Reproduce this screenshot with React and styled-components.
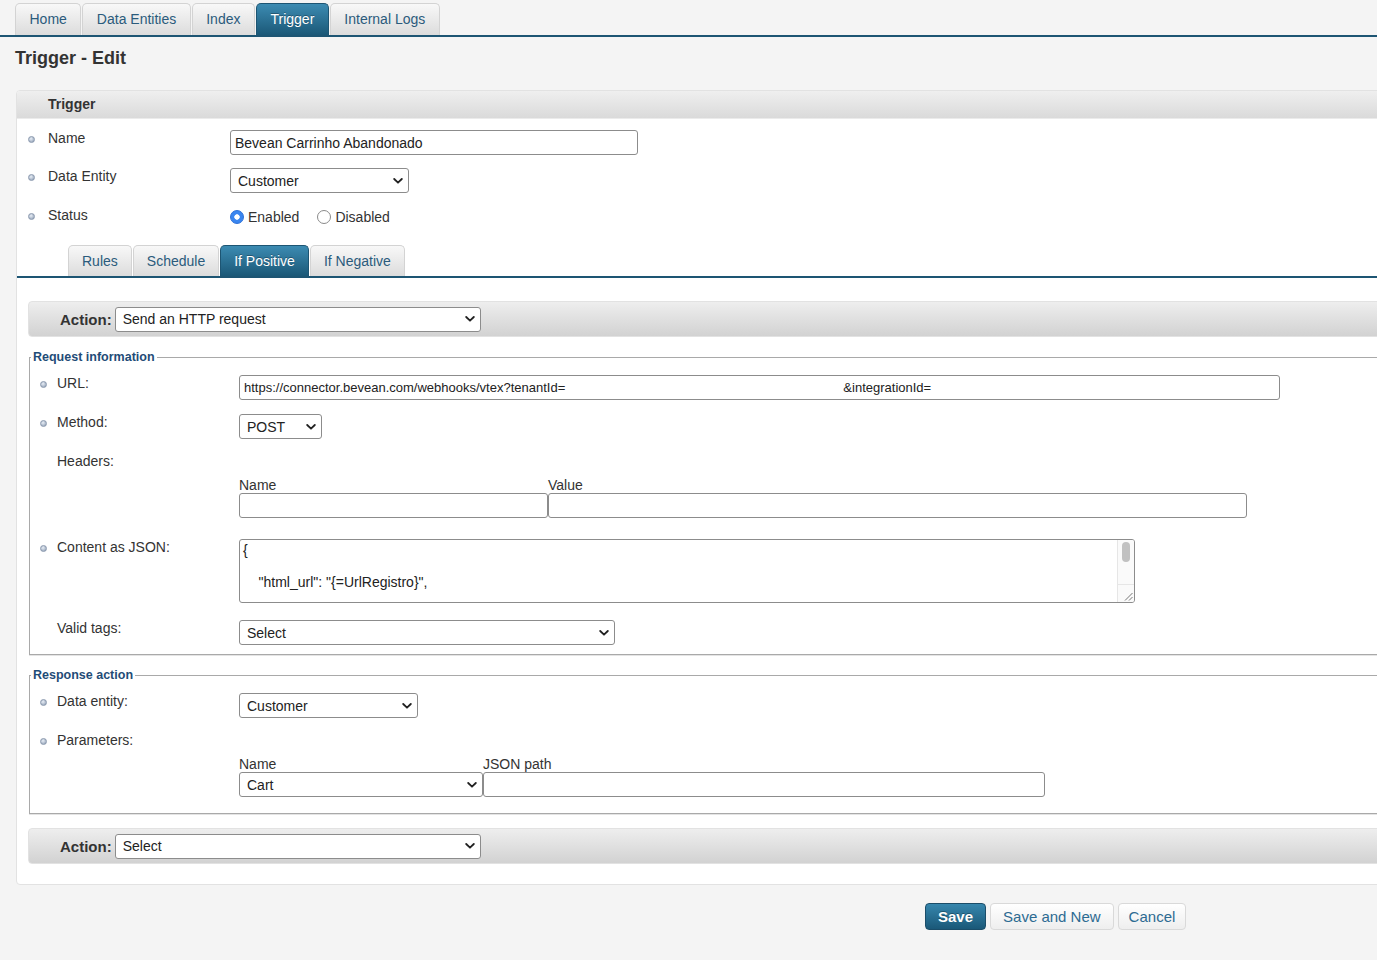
import React from 'react';
import styled, { createGlobalStyle, css } from 'styled-components';

const FONT = '"Liberation Sans", Arial, Helvetica, sans-serif';

const GlobalStyle = createGlobalStyle`
  html, body {
    margin: 0;
    background: #f4f4f4;
    font-family: ${FONT};
    color: #333;
    overflow-x: hidden;
  }
`;

const JSON_TEXT = `{

    "html_url": "{=UrlRegistro}",

    "id": "{=Id}",
    "email": "{=email}",
    "firstName": "{=firstName}",
    "lastName": "{=lastName}",
    "phone": "{=phone}",
    "items": "{=rclastcart}"
}`;

const URL_VALUE =
  'https://connector.bevean.com/webhooks/vtex?tenantId=' +
  ' '.repeat(77) +
  '&integrationId=';

const Chevron = () => (
  <svg width="10" height="7" viewBox="0 0 10 7">
    <polyline points="1.2,1.5 5,5.2 8.8,1.5" fill="none" stroke="#222" strokeWidth="1.8" strokeLinecap="round" strokeLinejoin="round" />
  </svg>
);

const ResizeGrip = () => (
  <svg width="9" height="9" viewBox="0 0 9 9">
    <line x1="8.5" y1="1" x2="1" y2="8.5" stroke="#777" strokeWidth="1" />
    <line x1="8.5" y1="5" x2="5" y2="8.5" stroke="#777" strokeWidth="1" />
  </svg>
);

const Select = ({ width, value }) => (
  <SelectWrap style={{ width }}>
    <NativeSelect defaultValue={value}>
      <option>{value}</option>
    </NativeSelect>
    <ChevronSlot>
      <Chevron />
    </ChevronSlot>
  </SelectWrap>
);

const Field = ({ label, bullet = true, col, h, children }) => (
  <Row $col={col} $h={h}>
    <Label>
      <Bullet $hidden={!bullet} $gap={col === 202 ? 13 : 10} />
      {label}
    </Label>
    <Value>{children}</Value>
  </Row>
);

const App = () => {
  return (
    <Page>
      <GlobalStyle />
      <NavBar>
        <Tab>Home</Tab>
        <Tab>Data Entities</Tab>
        <Tab>Index</Tab>
        <Tab $active>Trigger</Tab>
        <Tab>Internal Logs</Tab>
      </NavBar>

      <Title>Trigger - Edit</Title>

      <Panel>
        <PanelHeader>Trigger</PanelHeader>
        <PanelBody>
          <Field label="Name" col={202} h={38}>
            <TextInput $w={408} defaultValue="Bevean Carrinho Abandonado" />
          </Field>
          <Field label="Data Entity" col={202} h={39}>
            <Select width={179} value="Customer" />
          </Field>
          <Field label="Status" col={202} h={38}>
            <RadioGroup>
              <RadioLabel>
                <Radio type="radio" name="status" defaultChecked />
                Enabled
              </RadioLabel>
              <RadioLabel>
                <Radio type="radio" name="status" />
                Disabled
              </RadioLabel>
            </RadioGroup>
          </Field>
        </PanelBody>

        <SubTabBar>
          <Tab $sub>Rules</Tab>
          <Tab $sub>Schedule</Tab>
          <Tab $sub $active>If Positive</Tab>
          <Tab $sub>If Negative</Tab>
        </SubTabBar>

        <Section>
          <ActionBar>
            <ActionLabel>Action:</ActionLabel>
            <Select width={366} value="Send an HTTP request" />
          </ActionBar>

          <Fieldset>
            <Legend>Request information</Legend>
            <Field label="URL:" col={199} h={39}>
              <TextInput $w={1041} $size={13} defaultValue={URL_VALUE} />
            </Field>
            <Field label="Method:" col={199} h={39}>
              <Select width={83} value="POST" />
            </Field>
            <Field label="Headers:" bullet={false} col={199} h={86}>
              <Columns $cols="309px 699px">
                <ColLabel>Name</ColLabel>
                <ColLabel>Value</ColLabel>
                <TextInput $w={309} />
                <TextInput $w={699} />
              </Columns>
            </Field>
            <Field label="Content as JSON:" col={199} h={81}>
              <JsonWrap>
                <JsonArea defaultValue={JSON_TEXT} />
                <ScrollTrack>
                  <ScrollThumb />
                  <ScrollCorner>
                    <ResizeGrip />
                  </ScrollCorner>
                </ScrollTrack>
              </JsonWrap>
            </Field>
            <Field label="Valid tags:" bullet={false} col={199} h={25}>
              <Select width={376} value="Select" />
            </Field>
          </Fieldset>

          <Fieldset $second>
            <Legend>Response action</Legend>
            <Field label="Data entity:" col={199} h={39}>
              <Select width={179} value="Customer" />
            </Field>
            <Field label="Parameters:" col={199} h={65}>
              <Columns $cols="244px 562px">
                <ColLabel>Name</ColLabel>
                <ColLabel>JSON path</ColLabel>
                <Select width={244} value="Cart" />
                <TextInput $w={562} />
              </Columns>
            </Field>
          </Fieldset>

          <ActionBar $last>
            <ActionLabel>Action:</ActionLabel>
            <Select width={366} value="Select" />
          </ActionBar>
        </Section>
      </Panel>

      <ButtonRow>
        <Button $primary>Save</Button>
        <Button>Save and New</Button>
        <Button $narrow>Cancel</Button>
      </ButtonRow>
    </Page>
  );
};

const Page = styled.div`
  width: 100%;
  overflow: hidden;
  padding-bottom: 40px;
`;

const NavBar = styled.div`
  display: flex;
  gap: 1px;
  padding: 3px 0 0 15px;
  border-bottom: 2px solid #1d5573;
`;

const Tab = styled.div`
  box-sizing: border-box;
  height: ${(p) => (p.$sub ? 31 : 32)}px;
  line-height: ${(p) => (p.$sub ? 30 : 31)}px;
  padding: 0 ${(p) => (p.$sub ? 13 : 13.5)}px;
  font-size: 14px;
  color: #2b5b7c;
  border: 1px solid #d3d3d3;
  border-bottom: none;
  border-radius: 5px 5px 0 0;
  background: linear-gradient(#f8f8f8, #dcdcdc);
  white-space: nowrap;
  cursor: pointer;

  ${(p) =>
    p.$active &&
    css`
      color: #fff;
      border-color: #1d5573;
      background: linear-gradient(#3c8bb2, #1b5877);
      text-shadow: 0 -1px 0 rgba(0, 0, 0, 0.3);
    `}
`;

const Title = styled.h1`
  margin: 11px 0 22px 15px;
  font-size: 18px;
  line-height: 20px;
  font-weight: bold;
  color: #333;
`;

const Panel = styled.div`
  width: 1420px;
  margin-left: 16px;
  background: #fff;
  border: 1px solid #e2e2e2;
  border-radius: 4px;
  overflow: hidden;
`;

const PanelHeader = styled.div`
  height: 27px;
  line-height: 27px;
  padding-left: 31px;
  font-size: 14px;
  font-weight: bold;
  color: #333;
  background: linear-gradient(#efefef, #dadada);
  border-bottom: 1px solid #ebebeb;
`;

const PanelBody = styled.div`
  padding: 11px 0 0 11px;
`;

const Row = styled.div`
  display: grid;
  grid-template-columns: ${(p) => p.$col}px 1fr;
  align-items: start;
  height: ${(p) => p.$h}px;
`;

const Label = styled.div`
  display: flex;
  align-items: center;
  font-size: 14px;
  line-height: 16px;
  color: #333;
  white-space: nowrap;
`;

const Bullet = styled.span`
  flex: none;
  width: 5px;
  height: 5px;
  margin: 3px ${(p) => p.$gap}px 0 0;
  border-radius: 50%;
  background: radial-gradient(circle at 40% 35%, #e8eef6, #8797ae);
  border: 0.5px solid #8a99ae;
  visibility: ${(p) => (p.$hidden ? 'hidden' : 'visible')};
`;

const Value = styled.div`
  display: flex;
  align-items: flex-start;
`;

const fieldBase = css`
  box-sizing: border-box;
  height: 25px;
  border: 1px solid #8c8c8c;
  border-radius: 3px;
  background: #fff;
  font-family: ${FONT};
  font-size: 14px;
  color: #222;
  outline: none;
`;

const TextInput = styled.input`
  ${fieldBase};
  width: ${(p) => p.$w}px;
  padding: 0 4px;
  font-size: ${(p) => p.$size || 14}px;
`;

const SelectWrap = styled.div`
  position: relative;
  display: inline-block;
`;

const NativeSelect = styled.select`
  ${fieldBase};
  width: 100%;
  appearance: none;
  padding: 0 24px 0 7px;
`;

const ChevronSlot = styled.span`
  position: absolute;
  right: 6px;
  top: 50%;
  transform: translateY(-50%);
  display: flex;
  pointer-events: none;
`;

const RadioGroup = styled.div`
  display: flex;
  gap: 18px;
  padding-top: 1px;
`;

const RadioLabel = styled.label`
  display: flex;
  align-items: center;
  gap: 4px;
  font-size: 14px;
  line-height: 18px;
  color: #333;
`;

const Radio = styled.input`
  appearance: none;
  margin: 0;
  width: 14px;
  height: 14px;
  border-radius: 50%;
  border: 1px solid #8a8a8a;
  background: #fff;

  &:checked {
    border-color: #2a6fd8;
    background: radial-gradient(circle, #fff 0 2.4px, #3a86f0 3px);
  }
`;

const SubTabBar = styled.div`
  display: flex;
  gap: 1px;
  padding-left: 51px;
  border-bottom: 2px solid #1d5573;
`;

const Section = styled.div`
  padding: 23px 0 20px 11px;
`;

const ActionBar = styled.div`
  display: flex;
  align-items: center;
  gap: 3px;
  box-sizing: border-box;
  height: 36px;
  margin-top: ${(p) => (p.$last ? 14 : 0)}px;
  padding-left: 31px;
  border: 1px solid #e2e2e2;
  border-radius: 4px 0 0 4px;
  background: linear-gradient(#eeeeee, #d2d2d2);
`;

const ActionLabel = styled.span`
  font-size: 15px;
  font-weight: bold;
  color: #333;
`;

const Fieldset = styled.fieldset`
  margin: 13px 0 0 1px;
  padding: 11px 0 ${(p) => (p.$second ? 16 : 9)}px 10px;
  border: 1px solid #a9a9a9;
  border-right: none;
  box-shadow: 0 1px 0 #e4e4e4;
`;

const Legend = styled.legend`
  margin-left: -9px;
  padding: 0 2px;
  font-size: 12.5px;
  font-weight: bold;
  color: #1f4c77;
`;

const Columns = styled.div`
  display: grid;
  grid-template-columns: ${(p) => p.$cols};
  padding-top: 24px;
`;

const ColLabel = styled.div`
  font-size: 14px;
  line-height: 16px;
  color: #333;
`;

const JsonWrap = styled.div`
  position: relative;
  width: 896px;
  height: 64px;
`;

const JsonArea = styled.textarea`
  box-sizing: border-box;
  display: block;
  width: 100%;
  height: 100%;
  padding: 2px 20px 2px 3px;
  border: 1px solid #8c8c8c;
  border-radius: 3px;
  font-family: ${FONT};
  font-size: 14px;
  line-height: 16px;
  color: #222;
  resize: none;
  overflow: hidden;
  outline: none;
`;

const ScrollTrack = styled.div`
  position: absolute;
  top: 1px;
  right: 1px;
  bottom: 1px;
  width: 16px;
  background: #fafafa;
  border-left: 1px solid #e6e6e6;
  border-radius: 0 2px 2px 0;
  pointer-events: none;
`;

const ScrollThumb = styled.div`
  margin: 2px auto 0;
  width: 8px;
  height: 20px;
  border-radius: 4px;
  background: #c1c1c1;
`;

const ScrollCorner = styled.div`
  position: absolute;
  left: 0;
  right: 0;
  bottom: 0;
  height: 16px;
  border-top: 1px solid #e6e6e6;
  display: flex;
  align-items: flex-end;
  justify-content: flex-end;
  padding: 0 1px 1px 0;
`;

const ButtonRow = styled.div`
  display: flex;
  gap: 4px;
  margin-top: 18px;
  padding-left: 925px;
`;

const Button = styled.button`
  box-sizing: border-box;
  height: 27px;
  padding: 0 ${(p) => (p.$narrow ? 10 : 12)}px;
  border-radius: 4px;
  font-family: ${FONT};
  font-size: 15px;
  cursor: pointer;
  border: 1px solid #d9d9d9;
  color: #2d6b92;
  background: linear-gradient(#ffffff, #eeeeee);

  ${(p) =>
    p.$primary &&
    css`
      font-weight: bold;
      color: #fff;
      border-color: #1b4d69;
      background: linear-gradient(#3686ad, #1a5878);
      text-shadow: 0 -1px 0 rgba(0, 0, 0, 0.3);
    `}
`;

export default App;
